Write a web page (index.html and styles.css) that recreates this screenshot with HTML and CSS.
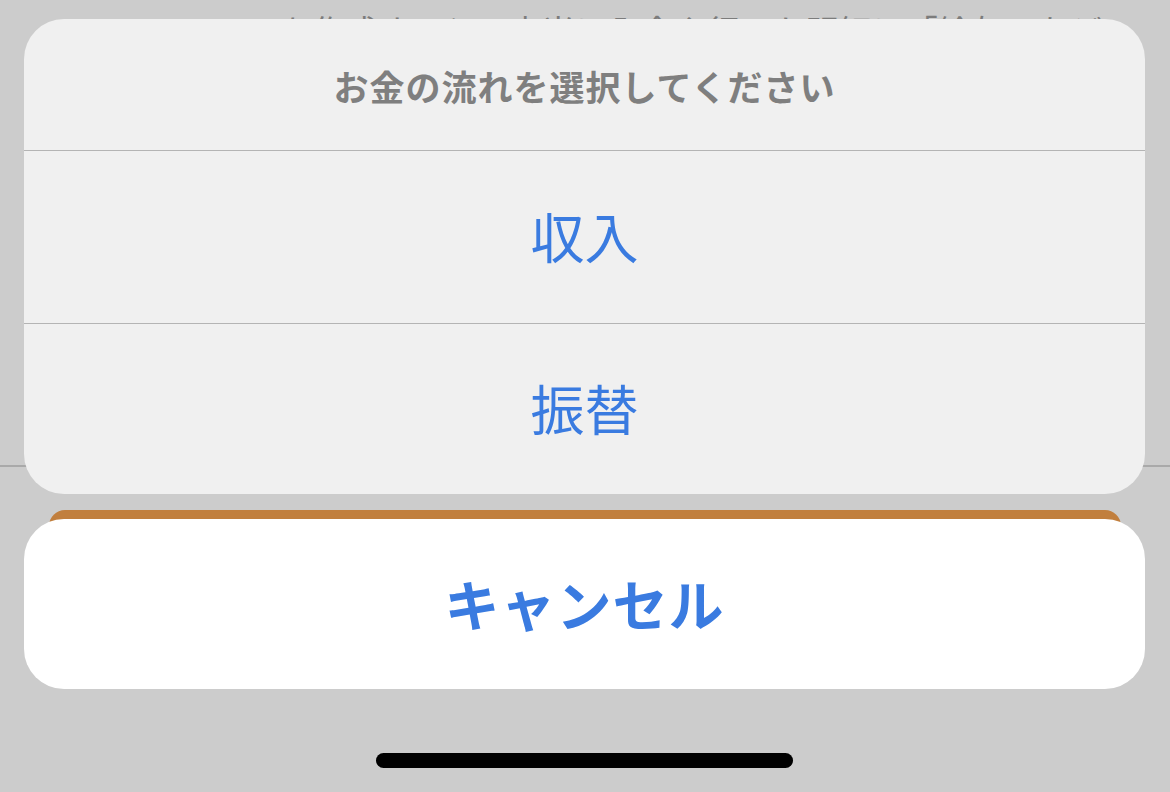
FILE: index.html
```html
<!DOCTYPE html>
<html lang="ja">
<head>
<meta charset="utf-8">
<title>お金の流れ</title>
<link rel="stylesheet" href="styles.css">
</head>
<body>
<main class="page">
  <p class="page-note">ルールを作成すると、本当に入金や行った明細に「給与」など</p>
  <div class="page-spacer"></div>
  <hr class="page-divider">
  <div class="page-button"></div>
</main>

<div class="overlay">
  <div class="action-sheet">
    <div class="sheet-group">
      <div class="sheet-title">お金の流れを選択してください</div>
      <button class="sheet-option">収入</button>
      <button class="sheet-option">振替</button>
    </div>
    <button class="sheet-cancel">キャンセル</button>
  </div>
  <div class="home-indicator"></div>
</div>
</body>
</html>
```

FILE: styles.css
```css
* {
  box-sizing: border-box;
}

html, body {
  margin: 0;
  padding: 0;
}

body {
  width: 1170px;
  height: 792px;
  overflow: hidden;
  background: #cccccc;
  font-family: "Noto Sans CJK JP", "Noto Sans", sans-serif;
  position: relative;
}

/* page underneath the dimmed sheet */
.page {
  display: flex;
  flex-direction: column;
  height: 100%;
}

.page-note {
  margin: 10px 0 0 0;
  padding: 0 0 0 180px;
  font-size: 33px;
  line-height: 40px;
  color: #7c7c7c;
  white-space: nowrap;
}

.page-spacer {
  height: 415px;
}

.page-divider {
  margin: 0;
  border: 0;
  height: 2px;
  background: #a9a9a9;
}

.page-button {
  margin: 43px 49px 0 49px;
  height: 120px;
  border-radius: 16px;
  background: #c17f3e;
}

/* action sheet */
.overlay {
  position: absolute;
  inset: 0;
  display: flex;
  flex-direction: column;
  align-items: center;
  padding: 19px 25px 0 24px;
}

.action-sheet {
  width: 100%;
  display: flex;
  flex-direction: column;
  gap: 25px;
}

.sheet-group {
  background: #f0f0f0;
  border-radius: 40px;
  overflow: hidden;
  display: flex;
  flex-direction: column;
}

.sheet-title {
  height: 132px;
  display: flex;
  align-items: center;
  justify-content: center;
  padding-top: 1px;
  font-size: 35px;
  font-weight: 700;
  color: #7f7f7f;
  letter-spacing: 1px;
  border-bottom: 1px solid #b4b4b4;
}

.sheet-option {
  border: 0;
  background: transparent;
  height: 172px;
  font-family: inherit;
  font-size: 54px;
  font-weight: 400;
  color: #3a7be0;
  padding: 0 0 4px 0;
}

.sheet-option + .sheet-option {
  border-top: 1px solid #b4b4b4;
  height: 171px;
  padding-bottom: 4px;
}

.sheet-cancel {
  border: 0;
  height: 170px;
  border-radius: 40px;
  background: #ffffff;
  font-family: inherit;
  font-size: 55px;
  font-weight: 700;
  color: #3a7be0;
  padding: 0 0 4px 0;
  letter-spacing: 1px;
}

.home-indicator {
  margin-top: 64px;
  width: 417px;
  height: 15px;
  border-radius: 8px;
  background: #000000;
}
```
